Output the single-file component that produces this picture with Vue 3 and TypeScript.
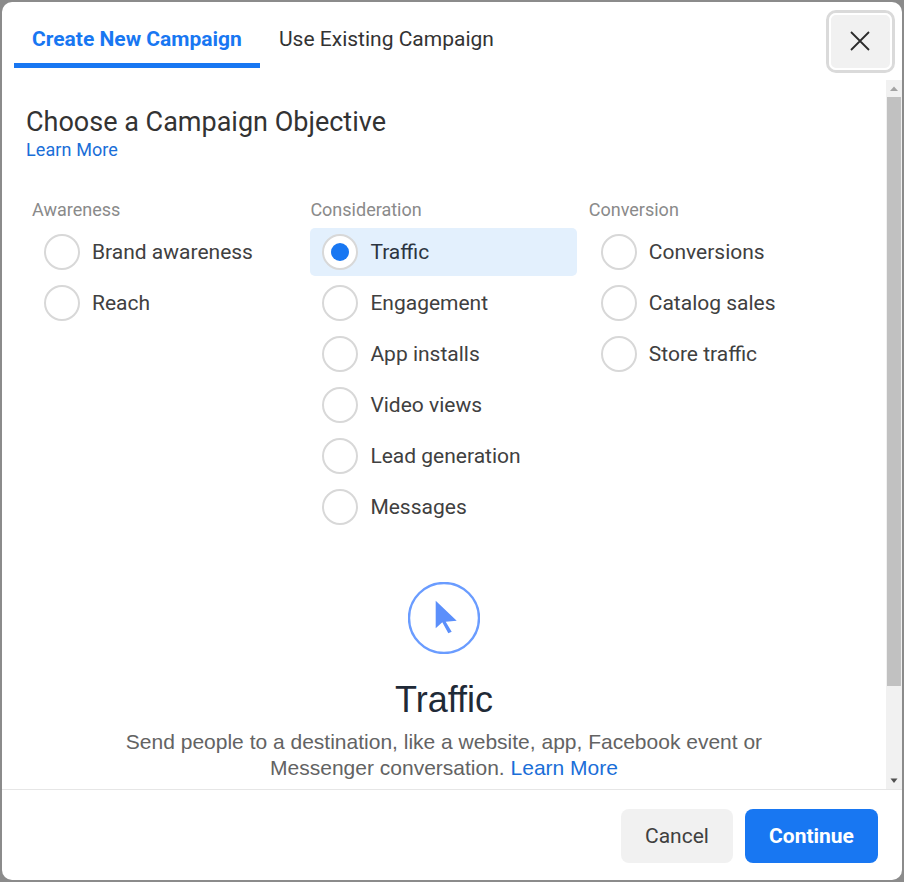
<script setup lang="ts">
interface Column { title: string; items: string[] }
const columns: Column[] = [
  { title: 'Awareness', items: ['Brand awareness', 'Reach'] },
  { title: 'Consideration', items: ['Traffic', 'Engagement', 'App installs', 'Video views', 'Lead generation', 'Messages'] },
  { title: 'Conversion', items: ['Conversions', 'Catalog sales', 'Store traffic'] },
]
const selected = 'Traffic'
</script>

<template>
  <div class="page">
    <div class="modal">
      <header class="head">
        <nav class="tabs">
          <div class="tab active">Create New Campaign</div>
          <div class="tab">Use Existing Campaign</div>
        </nav>
        <button class="close" aria-label="Close">
          <svg class="x" width="20" height="20" viewBox="0 0 20 20"><path d="M1 1 19 19M19 1 1 19" stroke="#2b2b2b" stroke-width="1.8" fill="none" /></svg>
        </button>
      </header>
      <div class="main">
        <div class="content">
          <h1 class="title">Choose a Campaign Objective</h1>
          <a class="learn">Learn More</a>
          <div class="cols">
            <section v-for="c in columns" :key="c.title" class="col">
              <div class="col-title">{{ c.title }}</div>
              <div v-for="it in c.items" :key="it" class="opt" :class="{ on: it === selected }">
                <span class="radio"><span v-if="it === selected" class="dot"></span></span>
                <span class="label">{{ it }}</span>
              </div>
            </section>
          </div>
          <div class="detail">
            <svg class="badge" width="72" height="72" viewBox="0 0 72 72">
              <circle cx="36" cy="36" r="35" fill="#fff" stroke="#6a9cff" stroke-width="2.4" />
              <path d="M27.7 18.7 48.700 38.700 37.700 39.700 43.700 49.700 40.300 51.300 34.300 40.300 27.700 46.300Z" fill="#5b8ffb" />
            </svg>
            <div class="d-title">Traffic</div>
            <p class="d-text">Send people to a destination, like a website, app, Facebook event or<br />Messenger conversation. <a>Learn More</a></p>
          </div>
        </div>
        <div class="scrollbar">
          <svg class="arrow" width="16" height="17" viewBox="0 0 16 17"><path d="M4 11 8 6.500 12 11Z" fill="#a3a3a3" /></svg>
          <div class="thumb"></div>
          <svg class="arrow" width="16" height="17" viewBox="0 0 16 17"><path d="M4.500 6.500 11.500 6.500 8 11Z" fill="#505050" /></svg>
        </div>
      </div>
      <footer class="foot">
        <button class="btn cancel">Cancel</button>
        <button class="btn go">Continue</button>
      </footer>
    </div>
  </div>
</template>

<style scoped>
.page { width: 904px; height: 882px; box-sizing: border-box; padding: 2px; background: #8b8b8b; font-family: Roboto, "Liberation Sans", sans-serif; overflow: hidden; }
.modal { width: 900px; height: 878px; background: #fff; border-radius: 10px; display: flex; flex-direction: column; overflow: hidden; }
.head { height: 78px; flex: none; display: flex; justify-content: space-between; padding: 8px 7px 0 12px; box-sizing: border-box; }
.tabs { display: flex; height: 58px; }
.tab { padding: 0 19px; font-size: 21px; line-height: 59px; color: #333; box-sizing: border-box; height: 58px; }
.tab.active { width: 246px; padding: 0 0 0 18px; color: #1877f2; font-weight: 700; border-bottom: 5px solid #1877f2; }
.close { width: 69px; height: 63px; border: 3px solid #dadada; outline: 2px solid #fff; outline-offset: -5px; border-radius: 10px; background: #f1f1f1; display: flex; align-items: center; justify-content: center; padding: 0; }
.x { display: block; margin: 0 1px 1px 0; }
.main { flex: 1; display: flex; min-height: 0; }
.content { flex: 1; min-width: 0; padding: 27px 0 0 24px; position: relative; }
.title { margin: 0; font-size: 27px; line-height: 30px; font-weight: 400; color: #333; }
.learn { display: block; font-size: 18px; line-height: 24px; letter-spacing: 0.1px; color: #1a6ed8; margin-top: 1px; }
.cols { display: flex; margin-top: 36px; margin-left: 6px; }
.col { width: 278.400px; flex: none; }
.col-title { font-size: 18px; line-height: 24px; color: #8a8a8a; margin-bottom: 6px; }
.opt { width: 267px; height: 48px; margin-bottom: 3px; display: flex; align-items: center; padding-left: 12px; box-sizing: border-box; border-radius: 5px; }
.opt.on { background: #e3f0fd; }
.radio { width: 36px; height: 36px; box-sizing: border-box; border: 2px solid #d8d8d8; border-radius: 50%; background: #fff; display: flex; align-items: center; justify-content: center; flex: none; }
.dot { width: 18px; height: 18px; border-radius: 50%; background: #1877f2; }
.label { margin-left: 12px; font-size: 21px; color: #404040; }
.on .label { color: #2c3440; }
.detail { position: absolute; left: 0; right: 0; top: 502px; display: flex; flex-direction: column; align-items: center; text-align: center; font-family: "Liberation Sans", Arial, sans-serif; }
.badge { display: block; }
.d-title { font-size: 36px; line-height: 40px; color: #1f2a37; margin-top: 26px; }
.d-text { margin: 9px 0 0; font-size: 21px; line-height: 26px; color: #636363; }
.d-text a { color: #1a6ed8; }
.scrollbar { width: 16px; flex: none; background: #f1f1f1; display: flex; flex-direction: column; }
.arrow { display: block; flex: none; }
.thumb { height: 589px; background: #c1c1c1; width: 14px; margin: 0 1px; flex: none; }
.scrollbar .arrow:last-child { margin-top: auto; }
.foot { height: 91px; flex: none; border-top: 1px solid #e6e6e6; box-sizing: border-box; display: flex; justify-content: flex-end; align-items: flex-start; gap: 12px; padding: 19px 24px 0 0; }
.btn { height: 54px; border: none; border-radius: 8px; font-family: Roboto, "Liberation Sans", sans-serif; font-size: 21px; padding: 0; }
.cancel { width: 112px; background: #f1f1f1; color: #404040; }
.go { width: 133px; background: #1877f2; color: #fff; font-weight: 700; }
</style>
